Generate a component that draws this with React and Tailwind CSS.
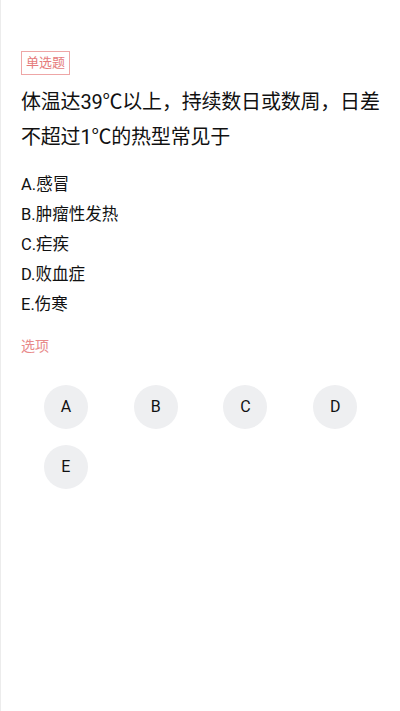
const options = [
  { key: 'A', text: '感冒' },
  { key: 'B', text: '肿瘤性发热' },
  { key: 'C', text: '疟疾' },
  { key: 'D', text: '败血症' },
  { key: 'E', text: '伤寒' },
];

export default function App() {
  return (
    <div
      className="min-h-[711px] w-[400px] bg-white border-l border-[#ececec] px-5 pt-[51px]"
      style={{ fontFamily: 'Roboto, "Noto Sans CJK SC", sans-serif' }}
    >
      {/* question type tag */}
      <div className="flex">
        <span className="h-[24px] border border-[#eea6a6] px-[4px] text-[13px] leading-[22px] text-[#e57b7b]">
          单选题
        </span>
      </div>

      {/* stem */}
      <p className="-mr-[14px] mt-[10px] text-[20px] leading-[35px] tracking-[-0.2px] text-[#111]">
        体温达39℃以上，持续数日或数周，日差不超过1℃的热型常见于
      </p>

      {/* options */}
      <div className="mt-[15px]">
        {options.map((o) => (
          <div key={o.key} className="text-[16.5px] leading-[30px] text-[#111]">
            {o.key}.{o.text}
          </div>
        ))}
      </div>

      <div className="mt-[16px] text-[14px] leading-[20px] text-[#e88a8a]">选项</div>

      {/* answer buttons */}
      <div className="mt-[29px] grid grid-cols-4 gap-y-[16px]">
        {options.map((o) => (
          <div key={o.key} className="flex justify-center">
            <button className="flex h-[44px] w-[44px] items-center justify-center rounded-full bg-[#eeeff1] text-[16px] text-[#111]">
              {o.key}
            </button>
          </div>
        ))}
      </div>
    </div>
  );
}
